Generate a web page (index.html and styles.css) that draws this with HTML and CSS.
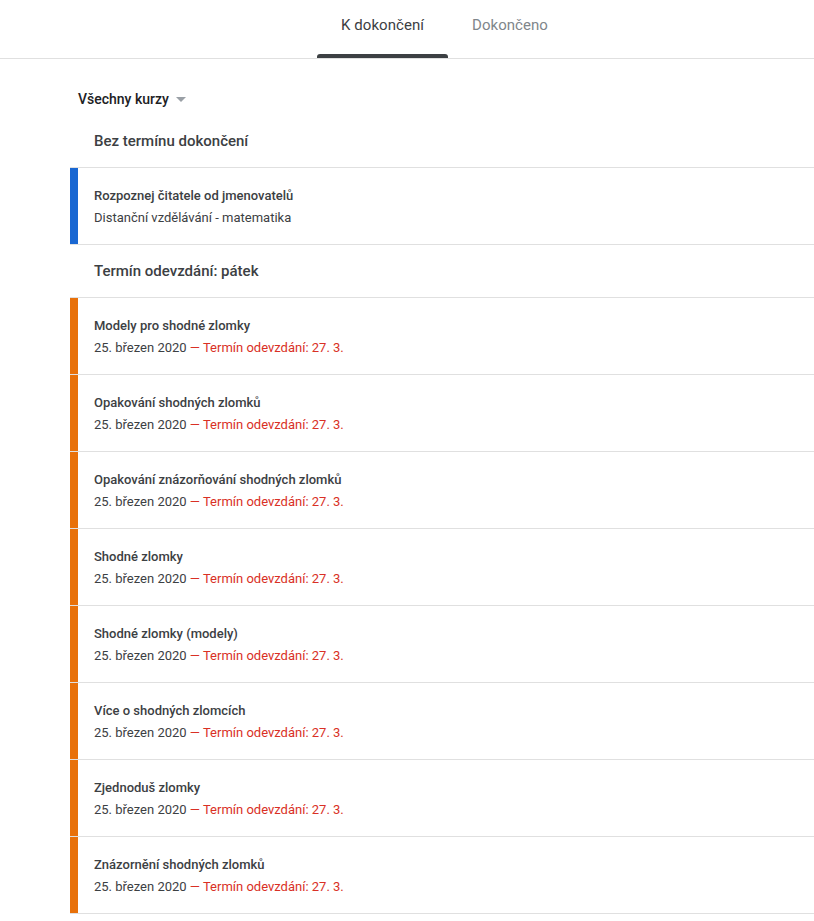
FILE: index.html
```html
<!DOCTYPE html>
<html lang="cs">
<head>
<meta charset="utf-8">
<title>Úkoly</title>
<link rel="stylesheet" href="styles.css">
</head>
<body>
<header class="topbar">
  <nav class="tabs">
    <a class="tab tab-active">K dokončení</a>
    <a class="tab">Dokončeno</a>
  </nav>
</header>
<main class="content">
  <div class="filter">
    <span class="filter-label">Všechny kurzy</span>
    <svg class="filter-arrow" width="10" height="5" viewBox="0 0 10 5"><path d="M0 0h10L5 5z" fill="#9aa0a6"/></svg>
  </div>

  <section>
    <h2 class="group-title">Bez termínu dokončení</h2>
    <div class="item item-blue">
      <div class="item-title">Rozpoznej čitatele od jmenovatelů</div>
      <div class="item-sub">Distanční vzdělávání - matematika</div>
    </div>
  </section>

  <section>
    <h2 class="group-title">Termín odevzdání: pátek</h2>
    <div class="item item-orange">
      <div class="item-title">Modely pro shodné zlomky</div>
      <div class="item-sub">25. březen 2020 <span class="due">— Termín odevzdání: 27. 3.</span></div>
    </div>
    <div class="item item-orange">
      <div class="item-title">Opakování shodných zlomků</div>
      <div class="item-sub">25. březen 2020 <span class="due">— Termín odevzdání: 27. 3.</span></div>
    </div>
    <div class="item item-orange">
      <div class="item-title">Opakování znázorňování shodných zlomků</div>
      <div class="item-sub">25. březen 2020 <span class="due">— Termín odevzdání: 27. 3.</span></div>
    </div>
    <div class="item item-orange">
      <div class="item-title">Shodné zlomky</div>
      <div class="item-sub">25. březen 2020 <span class="due">— Termín odevzdání: 27. 3.</span></div>
    </div>
    <div class="item item-orange">
      <div class="item-title">Shodné zlomky (modely)</div>
      <div class="item-sub">25. březen 2020 <span class="due">— Termín odevzdání: 27. 3.</span></div>
    </div>
    <div class="item item-orange">
      <div class="item-title">Více o shodných zlomcích</div>
      <div class="item-sub">25. březen 2020 <span class="due">— Termín odevzdání: 27. 3.</span></div>
    </div>
    <div class="item item-orange">
      <div class="item-title">Zjednoduš zlomky</div>
      <div class="item-sub">25. březen 2020 <span class="due">— Termín odevzdání: 27. 3.</span></div>
    </div>
    <div class="item item-orange">
      <div class="item-title">Znázornění shodných zlomků</div>
      <div class="item-sub">25. březen 2020 <span class="due">— Termín odevzdání: 27. 3.</span></div>
    </div>
  </section>
</main>
</body>
</html>
```
FILE: styles.css
```css
* { box-sizing: border-box; }
html, body { margin: 0; padding: 0; background: #fff; }
body {
  font-family: Roboto, "Liberation Sans", Arial, sans-serif;
  color: #202124;
}
.topbar {
  height: 59px;
  border-bottom: 1px solid #e0e0e0;
  display: flex;
  justify-content: center;
  padding-left: 75px;
}
.tabs { display: flex; height: 58px; }
.tab {
  display: flex;
  align-items: center;
  padding: 0 24px 8px;
  font-size: 15px;
  font-weight: 400;
  color: #80868b;
  position: relative;
  letter-spacing: 0.05px;
}
.tab-active { color: #3c4043; }
.tab-active::after {
  content: "";
  position: absolute;
  left: 0; right: 0; bottom: 0;
  height: 4px;
  background: #3c4043;
  border-radius: 3px 3px 0 0;
}
.content { padding: 30px 0 0 70px; }
.filter {
  display: flex;
  align-items: center;
  height: 20px;
  padding-left: 8px;
  margin-bottom: 6px;
}
.filter-label { font-size: 14px; font-weight: 500; color: #202124; }
.filter-arrow { margin-left: 7px; }
.group-title {
  margin: 0;
  height: 53px;
  display: flex;
  align-items: center;
  padding-left: 24px;
  font-size: 15px;
  font-weight: 500;
  color: #3c4043;
  border-bottom: 1px solid #e0e0e0;
}
.item {
  height: 77px;
  padding: 18px 0 0 24px;
  border-bottom: 1px solid #e0e0e0;
}
.item-blue { box-shadow: inset 8px 0 0 #1967d2; }
.item-orange { box-shadow: inset 8px 0 0 #e8710a; }
.item-title {
  font-size: 13px;
  line-height: 20px;
  font-weight: 500;
  color: #3c4043;
}
.item-sub {
  margin-top: 2px;
  font-size: 13px;
  line-height: 20px;
  color: #3c4043;
}
.due { color: #d93025; }
```
